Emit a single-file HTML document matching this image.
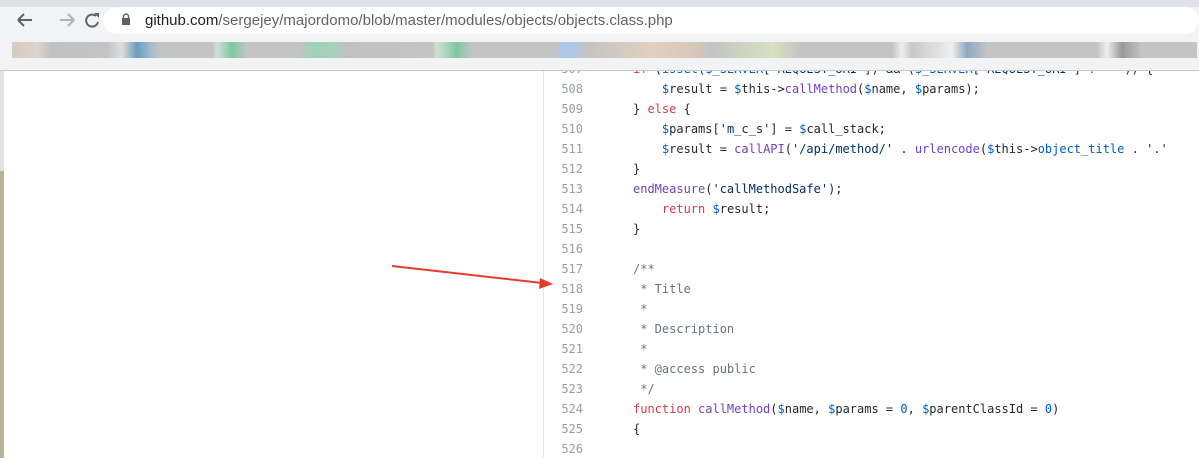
<!DOCTYPE html><html><head><style>
body{margin:0;width:1199px;height:458px;overflow:hidden;background:#fff;font-family:"Liberation Sans",sans-serif;position:relative}
.a{position:absolute}
.code{font-family:"DejaVu Sans Mono",monospace;font-size:12px;color:#24292e;white-space:pre}
.ln{position:absolute;left:545px;width:38px;text-align:right;color:#959da5;font-family:"DejaVu Sans Mono",monospace;font-size:12px}
.k{color:#d73a49}.f{color:#6f42c1}.v{color:#005cc5}.s{color:#032f62}.c{color:#6a737d}
</style></head><body>
<div class="a" style="left:0;top:0;width:1199px;height:7px;background:#dee1e6"></div>
<div class="a" style="left:0;top:7px;width:1199px;height:63px;background:#f1f3f4;border-bottom:1px solid #c8c8c8"></div>
<div class="a" style="left:103px;top:7px;width:1096px;height:27px;border-radius:14px;background:#fff"></div>
<svg class="a" style="left:10px;top:8px" width="100" height="24"><g stroke="#5f6368" stroke-width="2" fill="none"><path d="M8 12h14M8 12l6-6M8 12l6 6"/></g><g stroke="#b0b3b7" stroke-width="2" fill="none"><path d="M64 12H50M64 12l-6-6M64 12l-6 6"/></g><path d="M86 8a6 6 0 1 0 2 6" stroke="#5f6368" stroke-width="2" fill="none"/><path d="M84 5h5v5z" fill="#5f6368"/></svg>
<svg class="a" style="left:121px;top:13px" width="10" height="12"><rect x="1" y="5" width="8" height="7" fill="#5f6368"/><path d="M2.5 5V3.5a2.5 2.5 0 0 1 5 0V5" stroke="#5f6368" fill="none" stroke-width="1.4"/></svg>
<div class="a" style="left:145px;top:12px;font-size:15px;color:#202124">github.com<span style="color:#5f6368">/sergejey/majordomo/blob/master/modules/objects/objects.class.php</span></div>
<div class="a" style="left:0;top:71px;width:4px;height:100px;background:#e2e2e2"></div>
<div class="a" style="left:0;top:171px;width:4px;height:287px;background:#b8b49a"></div>
<div class="a" style="left:543px;top:71px;width:1px;height:387px;background:#e1e4e8"></div>
<div class="a code" style="left:633px;top:59px;line-height:20px"><span class="k">if</span> (<span class="v">isset</span>(<span class="v">$_SERVER</span>[<span class="s">'REQUEST_URI'</span>]) &amp;&amp; (<span class="v">$_SERVER</span>[<span class="s">'REQUEST_URI'</span>] != <span class="s">''</span>)) {
    <span class="v">$</span>result = <span class="v">$</span>this-&gt;<span class="f">callMethod</span>(<span class="v">$</span>name, <span class="v">$</span>params);
} <span class="k">else</span> {
    <span class="v">$</span>params[<span class="s">'m_c_s'</span>] = <span class="v">$</span>call_stack;
    <span class="v">$</span>result = <span class="f">callAPI</span>(<span class="s">'/api/method/'</span> . <span class="f">urlencode</span>(<span class="v">$</span>this-&gt;<span class="v">object_title</span> . <span class="s">'.'</span>
}
<span class="f">endMeasure</span>(<span class="s">'callMethodSafe'</span>);
    <span class="k">return</span> <span class="v">$</span>result;
}

<span class="c">/**</span>
<span class="c"> * Title</span>
<span class="c"> *</span>
<span class="c"> * Description</span>
<span class="c"> *</span>
<span class="c"> * @access public</span>
<span class="c"> */</span>
<span class="k">function</span> <span class="f">callMethod</span>(<span class="v">$</span>name, <span class="v">$</span>params = <span class="v">0</span>, <span class="v">$</span>parentClassId = <span class="v">0</span>)
{
</div>
<div class="ln" style="top:59px;line-height:20px;white-space:pre">507
508
509
510
511
512
513
514
515
516
517
518
519
520
521
522
523
524
525
526</div>
<div class="a" style="left:0;top:58px;width:1199px;height:12px;background:#f1f3f4;border-bottom:1px solid #c8c8c8"></div>
<div class="a" style="left:12px;top:42px;width:1185px;height:16px;background:linear-gradient(90deg,#d8cbc0 0,#ddd3cb 25px,#c0c0c0 40px,#c4c4c4 95px,#ddd 110px,#6a9cc0 125px,#aabccc 140px,#c4c4c4 150px,#c4c4c4 200px,#cfe0d6 205px,#80c8a0 220px,#c4c4c4 235px,#c4c4c4 285px,#a0d0b8 300px,#a8d0b8 325px,#c0c0c0 330px,#c4c4c4 420px,#cfe0d6 425px,#80c8a0 445px,#c4c4c4 460px,#c4c4c4 540px,#aac8ee 555px,#c4c4c4 575px,#e0d0c0 640px,#d8c8b8 680px,#c4c4c4 700px,#d8e0c0 760px,#c4c4c4 790px,#c4c4c4 880px,#eee 890px,#c8c8c8 900px,#eee 940px,#8ea8c0 955px,#c4c4c4 975px,#c4c4c4 1085px,#eee 1095px,#999 1110px,#c4c4c4 1130px)"></div>
<svg class="a" style="left:0;top:0" width="1199" height="458"><line x1="392" y1="266" x2="542" y2="283" stroke="#e53c2e" stroke-width="2"/><path d="M553 284l-13 -6l-1 11z" fill="#e53c2e"/></svg>
</body></html>
